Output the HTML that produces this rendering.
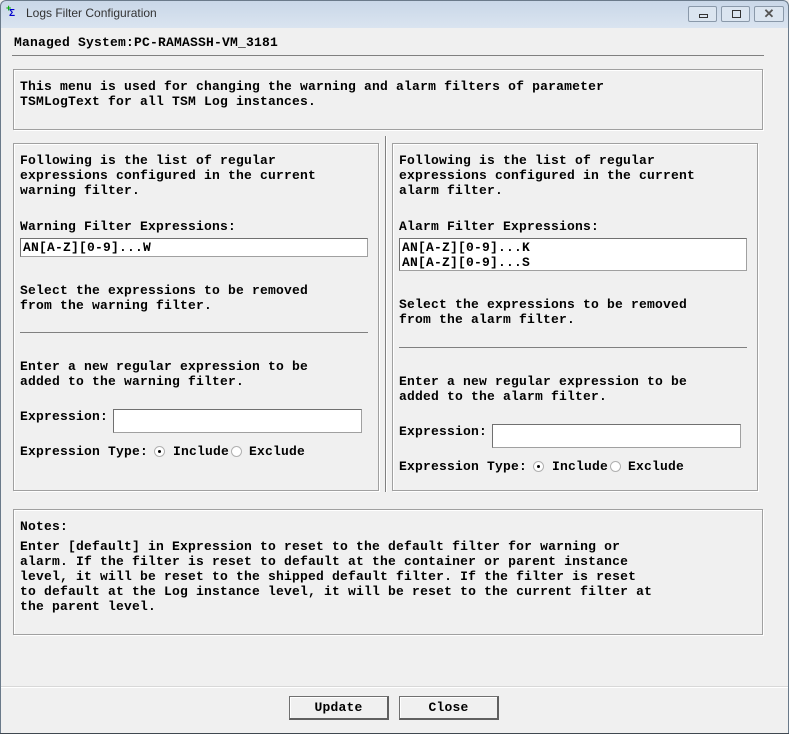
<!DOCTYPE html>
<html><head><style>
*{margin:0;padding:0;box-sizing:border-box}
body{width:789px;height:734px;background:#f0f0f0;position:relative;overflow:hidden;font-family:"Liberation Mono","DejaVu Sans Mono",monospace;font-size:13px;letter-spacing:0.2px;font-weight:bold;color:#000}
.a{position:absolute;white-space:pre;line-height:15px}
.box{position:absolute;border:1px solid #a0a0a0;box-shadow:inset 1px 1px 0 #fff,1px 1px 0 #fff}
.hr{position:absolute;height:1px;background:#808080}
.in{position:absolute;background:#fff;border:1px solid #a0a0a0;border-top-color:#707070;border-left-color:#707070}
.rad{position:absolute;width:11px;height:11px;border-radius:50%;background:#fff;border:1px solid #b0b0b0}
.btn{position:absolute;width:100px;height:24px;border:1px solid #707070;border-right:2px solid #606060;border-bottom:2px solid #606060;box-shadow:inset 1px 1px 0 #fff;background:#f0f0f0;text-align:center;line-height:21px}
</style></head><body>
<div style="position:absolute;left:0;top:0;width:789px;height:28px;background:linear-gradient(#c9d7e8,#dae4f0);border:1px solid #6a7a8a;border-bottom:none;border-radius:6px 6px 0 0"></div>
<div style="position:absolute;left:0;top:28px;width:1px;height:706px;background:#6a7a8a"></div>
<div style="position:absolute;right:0;top:6px;width:1px;height:728px;background:#6a7a8a"></div>
<div style="position:absolute;left:0;top:733px;width:789px;height:1px;background:#404850"></div>
<div class="a" style="left:6px;top:4px;font-family:'Liberation Sans',sans-serif;font-size:9px;color:#0a0;line-height:9px">+</div>
<div class="a" style="left:9px;top:9px;font-family:'Liberation Sans',sans-serif;font-size:10px;color:#00c;line-height:10px">Σ</div>
<div class="a" style="left:26px;top:6px;font-family:'Liberation Sans',sans-serif;font-weight:normal;letter-spacing:0;font-size:12px;color:#333">Logs Filter Configuration</div>
<div style="position:absolute;left:688px;top:6px;width:29px;height:16px;border:1px solid #8a99aa;border-radius:2px;background:#dbe5f0"><div style="position:absolute;left:10px;top:7px;width:9px;height:4px;border:1px solid #333"></div></div>
<div style="position:absolute;left:721px;top:6px;width:29px;height:16px;border:1px solid #8a99aa;border-radius:2px;background:#dbe5f0"><div style="position:absolute;left:10px;top:3px;width:9px;height:8px;border:1px solid #333"></div></div>
<div style="position:absolute;left:754px;top:6px;width:30px;height:16px;border:1px solid #8a99aa;border-radius:2px;background:#dbe5f0;text-align:center;font-family:'Liberation Sans',sans-serif;font-size:13px;line-height:14px;color:#555">✕</div>

<div class="a" style="left:14px;top:35px">Managed System:PC-RAMASSH-VM_3181</div>
<div class="hr" style="left:12px;top:55px;width:752px"></div>

<div class="box" style="left:13px;top:69px;width:750px;height:61px"></div>
<div class="a" style="left:20px;top:79px">This menu is used for changing the warning and alarm filters of parameter
TSMLogText for all TSM Log instances.</div>

<div style="position:absolute;left:385px;top:136px;width:1px;height:356px;background:#808080"></div>
<div style="position:absolute;left:386px;top:136px;width:1px;height:356px;background:#fff"></div>

<div class="box" style="left:13px;top:143px;width:366px;height:348px"></div>
<div class="a" style="left:20px;top:153px">Following is the list of regular
expressions configured in the current
warning filter.</div>
<div class="a" style="left:20px;top:219px">Warning Filter Expressions:</div>
<div class="in" style="left:20px;top:238px;width:348px;height:19px"><div class="a" style="left:2px;top:1px">AN[A-Z][0-9]...W</div></div>
<div class="a" style="left:20px;top:283px">Select the expressions to be removed
from the warning filter.</div>
<div class="hr" style="left:20px;top:332px;width:348px"></div>
<div class="a" style="left:20px;top:359px">Enter a new regular expression to be
added to the warning filter.</div>
<div class="a" style="left:20px;top:409px">Expression:</div>
<div class="in" style="left:113px;top:409px;width:249px;height:24px"></div>
<div class="a" style="left:20px;top:444px">Expression Type:</div>
<div class="rad" style="left:154px;top:446px"><div style="position:absolute;left:3px;top:3px;width:3px;height:3px;background:#000;border-radius:50%"></div></div>
<div class="a" style="left:173px;top:444px">Include</div>
<div class="rad" style="left:231px;top:446px"></div>
<div class="a" style="left:249px;top:444px">Exclude</div>

<div class="box" style="left:392px;top:143px;width:366px;height:348px"></div>
<div class="a" style="left:399px;top:153px">Following is the list of regular
expressions configured in the current
alarm filter.</div>
<div class="a" style="left:399px;top:219px">Alarm Filter Expressions:</div>
<div class="in" style="left:399px;top:238px;width:348px;height:33px"><div class="a" style="left:2px;top:1px">AN[A-Z][0-9]...K
AN[A-Z][0-9]...S</div></div>
<div class="a" style="left:399px;top:297px">Select the expressions to be removed
from the alarm filter.</div>
<div class="hr" style="left:399px;top:347px;width:348px"></div>
<div class="a" style="left:399px;top:374px">Enter a new regular expression to be
added to the alarm filter.</div>
<div class="a" style="left:399px;top:424px">Expression:</div>
<div class="in" style="left:492px;top:424px;width:249px;height:24px"></div>
<div class="a" style="left:399px;top:459px">Expression Type:</div>
<div class="rad" style="left:533px;top:461px"><div style="position:absolute;left:3px;top:3px;width:3px;height:3px;background:#000;border-radius:50%"></div></div>
<div class="a" style="left:552px;top:459px">Include</div>
<div class="rad" style="left:610px;top:461px"></div>
<div class="a" style="left:628px;top:459px">Exclude</div>

<div class="box" style="left:13px;top:509px;width:750px;height:126px"></div>
<div class="a" style="left:20px;top:519px">Notes:</div>
<div class="a" style="left:20px;top:539px">Enter [default] in Expression to reset to the default filter for warning or
alarm. If the filter is reset to default at the container or parent instance
level, it will be reset to the shipped default filter. If the filter is reset
to default at the Log instance level, it will be reset to the current filter at
the parent level.</div>

<div style="position:absolute;left:1px;top:686px;width:787px;height:1px;background:#d8d8d8"></div>
<div style="position:absolute;left:1px;top:687px;width:787px;height:1px;background:#fff"></div>
<div class="btn" style="left:289px;top:696px">Update</div>
<div class="btn" style="left:399px;top:696px">Close</div>
</body></html>
